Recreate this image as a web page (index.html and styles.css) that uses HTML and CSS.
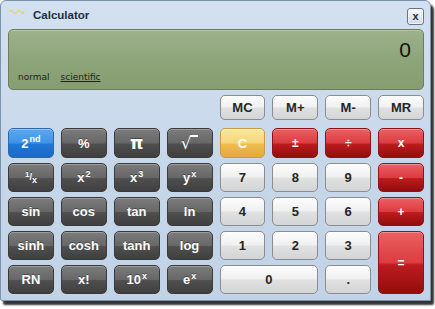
FILE: index.html
```html
<!DOCTYPE html>
<html lang="en">
<head>
<meta charset="utf-8">
<title>Calculator</title>
<link rel="stylesheet" href="styles.css">
</head>
<body>
<div class="window">
  <header class="titlebar">
    <svg class="app-icon" viewBox="0 0 17 6" aria-hidden="true">
      <path d="M1 4 Q3 1 5 4 T9 4 T13 4 T16 3" fill="none" stroke="#e2d35a" stroke-width="1.2"/>
    </svg>
    <span class="title">Calculator</span>
    <button class="close">x</button>
  </header>
  <section class="display">
    <div class="value">0</div>
    <div class="modes">
      <span class="mode">normal</span>
      <span class="mode active">scientific</span>
    </div>
  </section>
  <div class="keypad">
    <button class="key light mem first">MC</button>
    <button class="key light mem">M+</button>
    <button class="key light mem">M-</button>
    <button class="key light mem">MR</button>

    <button class="key blue">2<sup class="sup">nd</sup></button>
    <button class="key dark">%</button>
    <button class="key dark pi">π</button>
    <button class="key dark"><span class="root">√</span><span class="bar"></span></button>
    <button class="key yellow">C</button>
    <button class="key red">±</button>
    <button class="key red">÷</button>
    <button class="key red">x</button>

    <button class="key dark"><span class="frac"><sup>1</sup>/<sub>x</sub></span></button>
    <button class="key dark">x<sup class="sup">2</sup></button>
    <button class="key dark">x<sup class="sup">3</sup></button>
    <button class="key dark">y<sup class="sup">x</sup></button>
    <button class="key light">7</button>
    <button class="key light">8</button>
    <button class="key light">9</button>
    <button class="key red">-</button>

    <button class="key dark">sin</button>
    <button class="key dark">cos</button>
    <button class="key dark">tan</button>
    <button class="key dark">ln</button>
    <button class="key light">4</button>
    <button class="key light">5</button>
    <button class="key light">6</button>
    <button class="key red">+</button>

    <button class="key dark">sinh</button>
    <button class="key dark">cosh</button>
    <button class="key dark">tanh</button>
    <button class="key dark">log</button>
    <button class="key light">1</button>
    <button class="key light">2</button>
    <button class="key light">3</button>
    <button class="key red equals">=</button>

    <button class="key dark">RN</button>
    <button class="key dark">x!</button>
    <button class="key dark">10<sup class="sup">x</sup></button>
    <button class="key dark">e<sup class="sup">x</sup></button>
    <button class="key light zero">0</button>
    <button class="key light">.</button>
  </div>
</div>
</body>
</html>
```

FILE: styles.css
```css
* {
  box-sizing: border-box;
}

html,
body {
  margin: 0;
  padding: 0;
  background: #ffffff;
}

body {
  width: 435px;
  height: 309px;
  overflow: hidden;
  font-family: "Liberation Sans", Arial, sans-serif;
}

.window {
  width: 431px;
  height: 301px;
  border: 1px solid #7d92ad;
  border-radius: 6px 6px 2px 2px;
  background: linear-gradient(#d3e0ef, #c7d7ea 55%, #c2d3e7);
  box-shadow: 3px 4px 2px rgba(0, 0, 0, 0.8);
  padding: 0 6px 0 7px;
  display: flex;
  flex-direction: column;
}

.titlebar {
  height: 28px;
  display: flex;
  align-items: center;
}

.app-icon {
  width: 17px;
  height: 6px;
  align-self: flex-start;
  margin-top: 7px;
}

.title {
  margin-left: 8px;
  font-weight: bold;
  font-size: 11.5px;
  color: #1c2e46;
}

.close {
  margin-left: auto;
  align-self: flex-start;
  margin-top: 7px;
  width: 17px;
  height: 17px;
  padding: 0;
  border: 1px solid #64758c;
  border-radius: 3px;
  background: linear-gradient(#fafbfd, #e4e9f0 50%, #d3dae4);
  box-shadow: inset 0 0 0 1px rgba(255, 255, 255, 0.7);
  font: bold 11px "Liberation Sans", Arial, sans-serif;
  line-height: 13px;
  color: #1b2840;
}

.display {
  height: 61px;
  margin-bottom: 5px;
  border: 1px solid #6b7d5c;
  border-radius: 5px;
  background: linear-gradient(#9db18a, #8fa67b 45%, #869c71);
  box-shadow: inset 0 1px 0 rgba(255, 255, 255, 0.25);
  display: flex;
  flex-direction: column;
  padding: 8px 12px 6px 9px;
}

.value {
  text-align: right;
  font-size: 21px;
  line-height: 24px;
  color: #111;
}

.modes {
  margin-top: auto;
  display: flex;
  gap: 11px;
  font-family: "DejaVu Sans", Verdana, sans-serif;
  font-size: 9px;
  line-height: 11px;
  color: #1b2513;
}

.mode.active {
  text-decoration: underline;
}

.keypad {
  display: grid;
  grid-template-columns: repeat(8, 1fr);
  grid-template-rows: 28px 30px 29px 29px 29px 29px;
  column-gap: 7px;
  row-gap: 5px;
}

.key {
  padding: 0;
  border-radius: 5px;
  font: bold 13px "Liberation Sans", Arial, sans-serif;
  display: flex;
  align-items: center;
  justify-content: center;
  line-height: 1;
}

.mem {
  height: 25px;
  align-self: start;
}

.mem.first {
  grid-column: 5;
}

.light {
  border: 1px solid #8a8c90;
  background: linear-gradient(#fdfdfd, #f0f0f0 48%, #e1e1e1 52%, #d3d4d6);
  box-shadow: inset 0 1px 0 #fff;
  color: #262626;
}

.dark {
  border: 1px solid #3a3a3a;
  background: linear-gradient(#7c7c7c, #676767 50%, #4f4f4f 54%, #3f3f3f);
  box-shadow: inset 0 1px 0 rgba(255, 255, 255, 0.25);
  color: #fff;
  text-shadow: 0 -1px 0 rgba(0, 0, 0, 0.35);
}

.blue {
  border: 1px solid #2a68b0;
  background: linear-gradient(#5ba8f0, #3f92e5 50%, #1f77d8 54%, #1c69c6);
  box-shadow: inset 0 1px 0 rgba(255, 255, 255, 0.35);
  color: #fff;
}

.yellow {
  border: 1px solid #c99b42;
  background: linear-gradient(#fbe6a0, #f6d578 50%, #efbd4f 54%, #e3a93e);
  box-shadow: inset 0 1px 0 rgba(255, 255, 255, 0.5);
  color: #fff;
}

.red {
  border: 1px solid #8c1414;
  background: linear-gradient(#ec6064, #db3c40 50%, #bc1c1e 54%, #930c0c);
  box-shadow: inset 0 1px 0 rgba(255, 255, 255, 0.3);
  color: #fff;
  font-size: 12px;
}

.equals {
  grid-row: span 2;
}

.zero {
  grid-column: span 2;
}

.sup {
  font-size: 9px;
  line-height: 0;
  position: relative;
  top: -4px;
  margin-left: 1px;
}

.frac {
  font-size: 9px;
  display: inline-flex;
  align-items: center;
}

.frac sup {
  font-size: 8px;
  line-height: 0;
  position: relative;
  top: -3px;
  vertical-align: baseline;
}

.frac sub {
  font-size: 9px;
  line-height: 0;
  position: relative;
  top: 2px;
  vertical-align: baseline;
}

.pi {
  font-size: 17px;
  font-family: "DejaVu Sans", sans-serif;
}

.root {
  font-family: "DejaVu Sans", sans-serif;
  font-weight: normal;
  font-size: 17px;
}

.bar {
  display: inline-block;
  width: 8px;
  height: 1.5px;
  background: #fff;
  align-self: flex-start;
  margin-top: 6px;
  margin-left: -1px;
}
```
